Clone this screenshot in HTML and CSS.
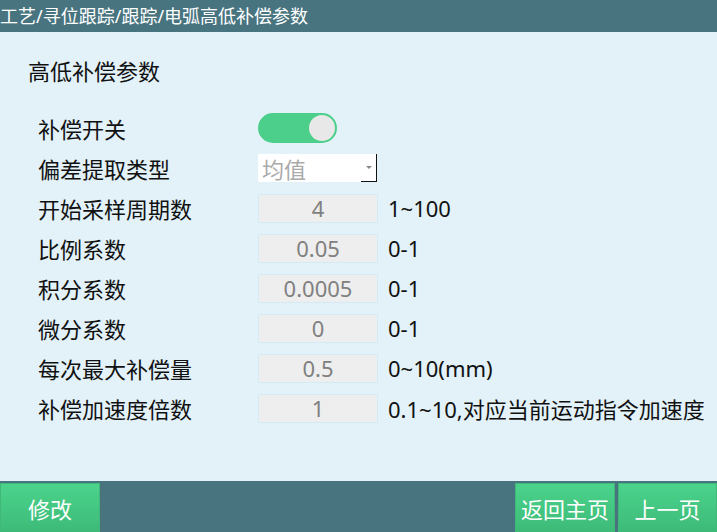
FILE: index.html
```html
<!DOCTYPE html>
<html lang="zh">
<head>
<meta charset="utf-8">
<link rel="stylesheet" href="styles.css">
</head>
<body>
<div class="page">
  <header class="topbar">工艺/寻位跟踪/跟踪/电弧高低补偿参数</header>
  <main class="content">
    <h1 class="title">高低补偿参数</h1>
    <div class="rows">
      <div class="row">
        <span class="label">补偿开关</span>
        <span class="toggle"><span class="knob"></span></span>
      </div>
      <div class="row">
        <span class="label">偏差提取类型</span>
        <span class="select"><span class="select-text">均值</span><span class="select-btn"><span class="arrow"></span></span></span>
      </div>
      <div class="row">
        <span class="label">开始采样周期数</span>
        <span class="input">4</span>
        <span class="range">1~100</span>
      </div>
      <div class="row">
        <span class="label">比例系数</span>
        <span class="input">0.05</span>
        <span class="range">0-1</span>
      </div>
      <div class="row">
        <span class="label">积分系数</span>
        <span class="input">0.0005</span>
        <span class="range">0-1</span>
      </div>
      <div class="row">
        <span class="label">微分系数</span>
        <span class="input">0</span>
        <span class="range">0-1</span>
      </div>
      <div class="row">
        <span class="label">每次最大补偿量</span>
        <span class="input">0.5</span>
        <span class="range">0~10(mm)</span>
      </div>
      <div class="row">
        <span class="label">补偿加速度倍数</span>
        <span class="input">1</span>
        <span class="range">0.1~10,对应当前运动指令加速度</span>
      </div>
    </div>
  </main>
  <footer class="bottombar">
    <button class="btn">修改</button>
    <span class="spacer"></span>
    <button class="btn">返回主页</button>
    <button class="btn">上一页</button>
  </footer>
</div>
</body>
</html>
```
FILE: styles.css
```css
* { box-sizing: border-box; }
html, body { margin: 0; padding: 0; }
body {
  font-family: "Noto Sans", "Noto Sans CJK SC", sans-serif;
  background: #e2f2f8;
  color: #111;
}
.page {
  width: 717px;
  height: 532px;
  display: flex;
  flex-direction: column;
  overflow: hidden;
}
.topbar {
  height: 32px;
  background: #47747f;
  color: #fff;
  font-size: 18px;
  line-height: 32px;
  padding-left: 0;
  white-space: nowrap;
}
.content {
  flex: 1;
  padding: 24px 0 0 28px;
}
.title {
  margin: 0;
  font-weight: normal;
  font-size: 22px;
  line-height: 30px;
  height: 30px;
}
.rows {
  margin-top: 22px;
  padding-left: 10px;
  display: flex;
  flex-direction: column;
}
.row {
  height: 40px;
  display: flex;
  align-items: center;
}
.label {
  width: 220px;
  font-size: 22px;
  white-space: nowrap;
}
.toggle {
  width: 79px;
  height: 30px;
  border-radius: 15px;
  background: #4ccf8a;
  display: flex;
  justify-content: flex-end;
  align-items: center;
  padding-right: 2px;
}
.knob {
  width: 26px;
  height: 26px;
  border-radius: 50%;
  background: #e8e8e8;
}
.select {
  width: 119px;
  height: 28px;
  background: #fff;
  display: flex;
  align-items: center;
  justify-content: space-between;
}
.select-text {
  font-size: 22px;
  color: #aaa;
  padding-left: 4px;
}
.select-btn {
  width: 16px;
  height: 28px;
  border-right: 1px solid #111;
  border-bottom: 1px solid #111;
  display: flex;
  align-items: center;
  justify-content: center;
}
.arrow {
  width: 0;
  height: 0;
  border-left: 3px solid transparent;
  border-right: 3px solid transparent;
  border-top: 3px solid #888;
}
.input {
  width: 120px;
  height: 29px;
  background: #eeeeee;
  border: 1px solid #d4ebf3;
  color: #808080;
  font-size: 22px;
  line-height: 27px;
  text-align: center;
}
.range {
  margin-left: 10px;
  font-size: 22px;
  white-space: nowrap;
}
.bottombar {
  height: 51px;
  background: #47747f;
  display: flex;
  align-items: flex-end;
  gap: 3px;
}
.spacer { flex: 1; }
.btn {
  height: 49px;
  width: 100px;
  border: 1px solid #3fb878;
  background: linear-gradient(#4bd38c, #3dbb78);
  color: #fff;
  font-family: "Noto Sans", "Noto Sans CJK SC", sans-serif;
  font-size: 22px;
  padding: 0;
  margin: 0;
}
.btn:last-child { width: 99px; }
```
